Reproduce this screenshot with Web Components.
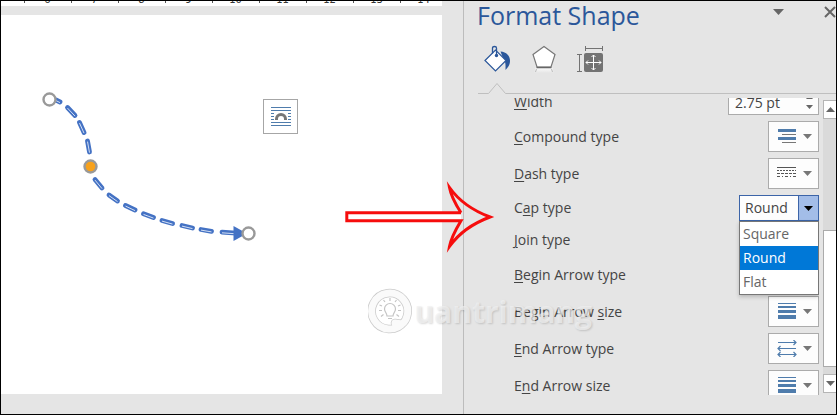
<!DOCTYPE html>
<html lang="en">
<head>
<meta charset="utf-8">
<title>Format Shape</title>
<style>
    * { box-sizing: border-box; }
    body {
        margin: 0;
        font-family: "Open Sans", "Noto Sans", sans-serif;
        color: #444;
    }
</style>
</head>
<body>
<app-window>
    <doc-view slot="document"></doc-view>
    <format-pane slot="pane" heading="Format Shape">
        <setting-row kind="spin" value="2.75 pt"><u>W</u>idth</setting-row>
        <setting-row kind="menu" icon="compound"><u>C</u>ompound type</setting-row>
        <setting-row kind="menu" icon="dash"><u>D</u>ash type</setting-row>
        <setting-row kind="combo" value="Round" options="Square,Round,Flat">C<u>a</u>p type</setting-row>
        <setting-row kind="combo"><u>J</u>oin type</setting-row>
        <setting-row kind="menu" icon="arrows"><u>B</u>egin Arrow type</setting-row>
        <setting-row kind="menu" icon="weights">Begin Arrow <u>s</u>ize</setting-row>
        <setting-row kind="menu" icon="arrows"><u>E</u>nd Arrow type</setting-row>
        <setting-row kind="menu" icon="weights">E<u>n</u>d Arrow size</setting-row>
    </format-pane>
    <pointer-arrow slot="overlay"></pointer-arrow>
    <water-mark slot="overlay">uantrimang</water-mark>
</app-window>

<script>
const ICONS = {
    compound: `
        <path d="M1 1h18v3H1zM1 9h18v3H1z" fill="#4f7cac"/>
        <path d="M5 6h14M5 14h14" stroke="#777" transform="translate(0 .5)"/>`,
    dash: `
        <path d="M0 2.500h19" stroke="#555"/>
        <path d="M0 5.500h19" stroke="#555" stroke-dasharray="2 1"/>
        <path d="M0 8.500h19" stroke="#555" stroke-dasharray="3 1"/>
        <path d="M0 11.500h19" stroke="#555" stroke-dasharray="3 2 1 2"/>`,
    weights: `<path d="M1 0h18v1H1zM1 3h18v2H1zM1 7h18v3H1zM1 12h18v4H1z" fill="#4f7cac"/>`,
    arrows: `
        <path d="M1 2.500h18M1 8.500h18M1 14.500h18M16.500 0l2.500 2.500L16.500 5M3.500 6L1 8.500L3.500 11M16.500 12l2.500 2.500-2.500 2.500M3.500 12L1 14.500L3.500 17"
            fill="none" stroke="#4f7cac" stroke-width="1.200"/>`
};

class AppWindow extends HTMLElement {
    constructor() {
        super();
        this.attachShadow({ mode: 'open' });
        this.shadowRoot.innerHTML = `
            <style>
                :host {
                    display: flex;
                    position: relative;
                    box-sizing: border-box;
                    height: 100vh;
                    border: 1px solid #000;
                    background: #e5e5e5;
                    overflow: hidden;
                }
            </style>
            <slot name="document"></slot>
            <slot name="pane"></slot>
            <slot name="overlay"></slot>
        `;
    }
}

class DocView extends HTMLElement {
    constructor() {
        super();
        this.attachShadow({ mode: 'open' });
        this.shadowRoot.innerHTML = `
            <style>
                :host {
                    display: flex;
                    flex-direction: column;
                    flex: 1;
                    min-width: 0;
                    padding-right: 21px;
                    box-sizing: border-box;
                }
                .ruler {
                    display: flex;
                    align-items: flex-end;
                    height: 5px;
                    padding-left: 23px;
                    background: #fff;
                    overflow: hidden;
                    font: 10px/12px "DejaVu Sans", sans-serif;
                    color: #333;
                }
                .ruler span {
                    flex: none;
                    box-sizing: border-box;
                    width: 47px;
                    text-align: center;
                    background: linear-gradient(#555, #555) 0 7px / 1px 2px no-repeat;
                }
                .page {
                    position: relative;
                    flex: 1;
                    margin: 9px 0 20px;
                    background: #fff;
                    overflow: hidden;
                }
                .shape {
                    position: absolute;
                    left: 0;
                    top: 0;
                }
                button {
                    position: absolute;
                    left: 262px;
                    top: 84px;
                    display: grid;
                    place-items: center;
                    width: 35px;
                    height: 35px;
                    padding: 0;
                    border: 1px solid #a6a6a6;
                    background: #fff;
                }
            </style>
            <div class="ruler"></div>
            <div class="page">
                <svg class="shape" width="260" height="240" viewBox="1 15 260 240" fill="none" stroke-linecap="round">
                    <g id="dashes"></g>
                    <path d="M233.500 226v15L247 233.500z" fill="#4472c4"/>
                    <g stroke="#999" stroke-width="2.400">
                        <circle cx="49.500" cy="99.500" r="6" fill="#fff"/>
                        <circle cx="90.500" cy="166.500" r="6" fill="#f7a11b"/>
                        <circle cx="248.500" cy="233.500" r="6" fill="#fff"/>
                    </g>
                </svg>
                <button type="button" aria-label="Layout Options">
                    <svg width="20" height="20" viewBox="0 0 20 20" fill="none">
                        <path d="M0 .5h20M0 3.500h20M0 6.500h3M17 6.500h3M0 9.500h3M17 9.500h3M0 12.500h3M17 12.500h3M0 15.500h20M0 18.500h20" stroke="#4f7cac"/>
                        <path d="M5.500 13v-1a4.500 4.500 0 0 1 9 0v1" stroke="#777" stroke-width="3"/>
                    </svg>
                </button>
            </div>
        `;
    }

    connectedCallback() {
        const ruler = this.shadowRoot.querySelector('.ruler');
        for (let n = 6; n <= 14; n++) {
            const mark = document.createElement('span');
            mark.textContent = n;
            ruler.appendChild(mark);
        }
        this._drawDashes();
    }

    _drawDashes() {
        const dashes = [
            [56, 100, 60, 102], [67.5, 107.5, 75, 115.5], [79.5, 122.5, 84, 132.5], [87.5, 141, 89.5, 152],
            [95, 179.5, 102, 188], [109, 195, 117.5, 201], [125.5, 205.5, 135, 210], [143.5, 213.8, 153.5, 217.5],
            [162, 220.5, 172.5, 223.5], [182, 225.5, 192.5, 228], [201, 229.5, 211.5, 231.3], [222, 232.2, 236, 233.2]
        ];
        this.shadowRoot.getElementById('dashes').innerHTML = dashes.map(([x1, y1, x2, y2]) => `
            <path d="M${x1} ${y1}L${x2} ${y2}" stroke="#4472c4" stroke-width="4.800"/>
            <path d="M${x1} ${y1 + 0.6}L${x2} ${y2 + 0.6}" stroke="#d3dff4" stroke-width="1" stroke-linecap="butt"/>
        `).join('');
    }
}

class FormatPane extends HTMLElement {
    constructor() {
        super();
        this.attachShadow({ mode: 'open' });
        this.shadowRoot.innerHTML = `
            <style>
                :host {
                    display: flex;
                    flex-direction: column;
                    flex: 0 0 373px;
                    box-sizing: border-box;
                    border-left: 1px solid #bcbcbc;
                    padding-bottom: 19px;
                }
                button {
                    padding: 0;
                    border: 0;
                    background: none;
                    display: grid;
                    place-items: center;
                }
                header {
                    display: flex;
                    align-items: flex-start;
                    gap: 40px;
                    height: 39px;
                    padding-left: 13px;
                }
                h1 {
                    flex: 1;
                    margin: 0;
                    font-size: 25px;
                    line-height: 28px;
                    font-weight: 400;
                    color: #2b579a;
                }
                header button { height: 22px; }
                nav {
                    display: flex;
                    gap: 19px;
                    height: 42px;
                    padding: 4px 0 0 20px;
                    box-sizing: border-box;
                }
                nav button { height: 30px; }
                .rule { display: flex; }
                .rule::before {
                    content: "";
                    width: 14px;
                }
                .rule i {
                    flex: 1;
                    border-bottom: 1px solid #bfbfbf;
                }
                .rule svg { display: block; }
                .body {
                    display: flex;
                    gap: 4px;
                    flex: 1;
                    min-height: 0;
                    margin-top: 4px;
                }
                .rows {
                    display: flex;
                    flex-direction: column;
                    gap: 6px;
                    flex: 1;
                    padding-left: 50px;
                    overflow: hidden;
                }
                .scroll {
                    display: flex;
                    flex-direction: column;
                    width: 13px;
                    padding: 2px 0 2px;
                    background: #e5e5e5;
                }
                .scroll button {
                    height: 19px;
                    border: 1px solid #b5b5b5;
                    border-right: 0;
                    background: #fff;
                }
                .track {
                    display: flex;
                    flex-direction: column;
                    flex: 1;
                    padding: 111px 0 7px;
                    background: #dadada;
                }
                .thumb {
                    flex: 1;
                    border: 1px solid #ababab;
                    border-right: 0;
                    background: #fff;
                }
            </style>
            <header>
                <h1></h1>
                <button type="button" aria-label="Task pane options">
                    <svg width="11" height="6"><path d="M0 0h11L5.500 6z" fill="#666"/></svg>
                </button>
                <button type="button" aria-label="Close">
                    <svg width="12" height="12"><path d="M1 1l10 10M11 1L1 11" stroke="#666" stroke-width="2"/></svg>
                </button>
            </header>
            <nav>
                <button type="button" aria-label="Fill and line">
                    <svg width="28" height="28" viewBox="0 0 28 28">
                        <path d="M16.500 6.500c6 .5 9.500 4 9.500 9.500 0 4-2 6.500-4.500 9 0-5 .5-8-2.500-12z" fill="#2b579a"/>
                        <path d="M1 15.500L11.500 5L22 15.500L11.500 26z" fill="#fff" stroke="#2b579a" stroke-width="1.200"/>
                        <path d="M8.500 8.500V3q0-1.500 2-1.500t2 1.500v7" fill="none" stroke="#2b579a" stroke-width="1.300"/>
                        <circle cx="12.500" cy="10.500" r="1.700" fill="#2b579a"/>
                    </svg>
                </button>
                <button type="button" aria-label="Effects">
                    <svg width="26" height="28" viewBox="0 0 26 28">
                        <defs>
                            <linearGradient id="fade" x2="0" y2="1">
                                <stop stop-color="#fff"/>
                                <stop offset="1" stop-color="#fff" stop-opacity="0"/>
                            </linearGradient>
                        </defs>
                        <path d="M5 22h16l2 6H3z" fill="url(#fade)"/>
                        <path d="M13 1.500L24 9.500L20 22H6L2 9.500z" fill="#fff" stroke="#777" stroke-width="1.200"/>
                        <path d="M5.500 22.500h15" stroke="#666" stroke-width="1.500"/>
                        <path d="M5.500 24l-1 3M20.500 24l1 3" stroke="#bbb"/>
                    </svg>
                </button>
                <button type="button" aria-label="Layout and properties">
                    <svg width="28" height="28" viewBox="0 0 28 28" fill="none">
                        <path d="M9.500 3.500h17M9.500 1v5M26.500 1v5M3.500 9.500v17M1 9.500h5M1 26.500h5" stroke="#737373"/>
                        <rect x="8" y="8" width="19" height="19" rx="2" fill="#737373"/>
                        <path d="M17.500 10v15M10 17.500h15M15.500 12l2-2 2 2M15.500 23l2 2 2-2M12 15.500l-2 2 2 2M23 15.500l2 2-2 2" stroke="#fff"/>
                    </svg>
                </button>
            </nav>
            <div class="rule">
                <svg width="28" height="12"><path d="M0 11.500h10.500L19 1.500l8.500 10H28" fill="none" stroke="#bfbfbf"/></svg>
                <i></i>
            </div>
            <div class="body">
                <div class="rows"><slot></slot></div>
                <div class="scroll">
                    <button type="button" aria-label="Scroll up"><svg width="9" height="5"><path d="M0 5L4.500 0L9 5z" fill="#666"/></svg></button>
                    <div class="track"><div class="thumb"></div></div>
                    <button type="button" aria-label="Scroll down"><svg width="9" height="5"><path d="M0 0h9L4.500 5z" fill="#666"/></svg></button>
                </div>
            </div>
        `;
    }

    connectedCallback() {
        this.shadowRoot.querySelector('h1').textContent = this.getAttribute('heading');
        // start a little way down the list
        requestAnimationFrame(() => {
            this.shadowRoot.querySelector('.rows').scrollTop = 9;
        });
    }
}

class SettingRow extends HTMLElement {
    constructor() {
        super();
        this.attachShadow({ mode: 'open' });
    }

    connectedCallback() {
        this.shadowRoot.innerHTML = `
            <style>
                * { box-sizing: border-box; }
                :host {
                    display: flex;
                    flex: none;
                    align-items: center;
                    justify-content: space-between;
                    font-size: 14px;
                    line-height: 20px;
                }
                ::slotted(u) { text-underline-offset: 2px; }
                .control { position: relative; }
                button, input, select {
                    display: block;
                    margin: 0;
                    border: 1px solid #ababab;
                    border-radius: 0;
                    background: #fdfdfd;
                    font: inherit;
                    color: #444;
                }
                .menu {
                    display: flex;
                    align-items: center;
                    justify-content: space-between;
                    width: 51px;
                    height: 31px;
                    padding: 0 6px 0 8px;
                }
                input {
                    width: 91px;
                    height: 26px;
                    padding: 0 6px;
                }
                .spin {
                    position: absolute;
                    right: 6px;
                    top: 6px;
                }
                select {
                    appearance: none;
                    width: 80px;
                    height: 26px;
                    padding: 0 5px;
                    border-color: #3c64a8;
                }
                .drop {
                    position: absolute;
                    right: 1px;
                    top: 1px;
                    display: grid;
                    place-items: center;
                    width: 20px;
                    height: 24px;
                    border-left: 1px solid #3c64a8;
                    background: #a3bde8;
                    pointer-events: none;
                }
                ul {
                    position: absolute;
                    z-index: 1;
                    left: 0;
                    right: 0;
                    top: 26px;
                    margin: 0;
                    padding: 0;
                    list-style: none;
                    border: 1px solid #777;
                    background: #fff;
                    color: #666;
                    box-shadow: 0 2px 4px rgba(0, 0, 0, 0.2);
                }
                li {
                    padding: 2px 3px;
                }
                li[aria-selected="true"] {
                    background: #0078d7;
                    color: #fff;
                }
            </style>
            <label for="field"><slot></slot></label>
            <div class="control">${this._control()}</div>
        `;
    }

    _control() {
        const value = this.getAttribute('value') || '';
        const kind = this.getAttribute('kind');
        if (kind === 'menu') {
            return `
                <button id="field" class="menu" type="button">
                    <svg width="20" height="17" viewBox="0 0 20 17">${ICONS[this.getAttribute('icon')]}</svg>
                    <svg width="9" height="5"><path d="M0 0h9L4.500 5z" fill="#777"/></svg>
                </button>`;
        }
        if (kind === 'spin') {
            return `
                <input id="field" type="text" value="${value}">
                <svg class="spin" width="7" height="14"><path d="M0 4L3.500 0L7 4zM0 10h7L3.500 14z" fill="#666"/></svg>`;
        }
        const options = (this.getAttribute('options') || '').split(',').filter(Boolean);
        const list = options.map(o => `<li role="option" aria-selected="${o === value}">${o}</li>`).join('');
        return `
            <select id="field">${options.map(o => `<option${o === value ? ' selected' : ''}>${o}</option>`).join('')}</select>
            <span class="drop"><svg width="9" height="5"><path d="M0 0h9L4.500 5z" fill="#000"/></svg></span>
            ${list ? `<ul role="listbox">${list}</ul>` : ''}`;
    }
}

class PointerArrow extends HTMLElement {
    constructor() {
        super();
        this.attachShadow({ mode: 'open' });
        this.shadowRoot.innerHTML = `
            <style>
                :host {
                    position: absolute;
                    right: 341px;
                    top: 180px;
                    pointer-events: none;
                }
                svg { display: block; }
            </style>
            <svg width="152" height="72" viewBox="343 181 152 72" fill="none">
                <path d="M347 212.500h114v8H347z" fill="#fff"/>
                <path d="M461 212.700H346.800v8H461C456 229 451 238 449.500 246.500C459 233 474 223 490 217C474 211 459 201 449.500 187.500C451 196 456 205 461 212.700" stroke="#f60d0d" stroke-width="3" stroke-miterlimit="8"/>
            </svg>
        `;
    }
}

class WaterMark extends HTMLElement {
    constructor() {
        super();
        this.attachShadow({ mode: 'open' });
        this.shadowRoot.innerHTML = `
            <style>
                :host {
                    position: absolute;
                    right: 244px;
                    top: 286px;
                    display: flex;
                    align-items: center;
                    font-size: 30px;
                    line-height: 50px;
                    font-weight: 700;
                    color: rgba(242, 242, 242, 0.7);
                    text-shadow: 1px 1px 2px rgba(0, 0, 0, 0.15);
                    pointer-events: none;
                }
            </style>
            <svg width="46" height="50" viewBox="0 0 46 50" fill="none">
                <g stroke-linecap="round">
                    <path d="M36 35A18 18 0 1 1 39 29q-1 5-5 8l-7-1" stroke="#bdbdbd" stroke-opacity=".8" stroke-width="8.500"/>
                    <path d="M36 35A18 18 0 1 1 39 29q-1 5-5 8l-7-1" stroke="#fafafa" stroke-width="7"/>
                </g>
                <g stroke="#c4c4c4" stroke-width="1.200">
                    <path d="M19 29c0-3-2.500-4-2.500-7a5.500 5.500 0 0 1 11 0c0 3-2.500 4-2.500 7zM20 31.500h4"/>
                    <path d="M22 11v3M15.500 13l1.500 2M28.500 13l-1.500 2M11.500 18l2.500 1M32.500 18l-2.500 1M11 23.500h3M33 23.500h-3M13 29.500l2.500-2M31 29.500l-2.500-2"/>
                </g>
            </svg>
            <slot></slot>
        `;
    }
}

customElements.define('app-window', AppWindow);
customElements.define('doc-view', DocView);
customElements.define('format-pane', FormatPane);
customElements.define('setting-row', SettingRow);
customElements.define('pointer-arrow', PointerArrow);
customElements.define('water-mark', WaterMark);
</script>
</body>
</html>
